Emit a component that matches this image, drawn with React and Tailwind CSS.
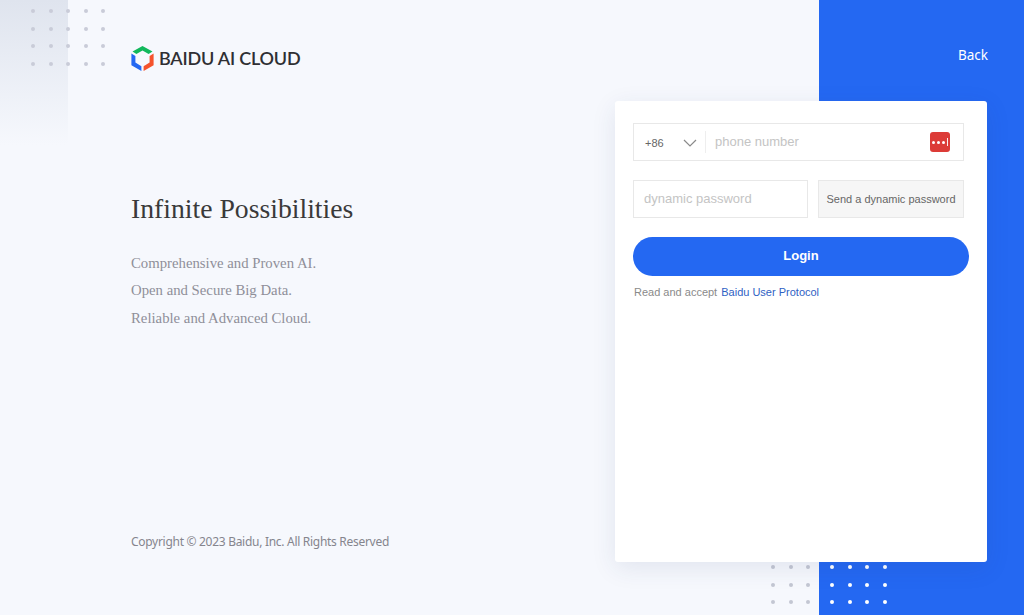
import React from 'react';

const DotGrid = ({ cols, rows, className, dotClass }) => (
  <div
    className={`absolute grid gap-[13.5px] ${cols === 5 ? 'grid-cols-5' : cols === 4 ? 'grid-cols-4' : 'grid-cols-3'} ${className}`}
  >
    {Array.from({ length: cols * rows }).map((_, i) => (
      <span key={i} className={`block w-1 h-1 rounded-full ${dotClass}`} />
    ))}
  </div>
);

const CubeLogo = () => (
  <svg width="23" height="26" viewBox="0 0 23 26" className="shrink-0">
    <path d="M11.5 0 L21.5 5.6 L17.6 8 L11.5 4.6 L5.4 8 L1.5 5.6 Z" fill="#12b85c" />
    <path d="M0.4 7.6 L4.4 10 L4.4 16.6 L10.4 20.2 L10.4 25 L0.4 19.2 Z" fill="#2468f2" />
    <path d="M22.6 7.6 L22.6 19.2 L12.6 25 L12.6 20.2 L18.6 16.6 L18.6 10 Z" fill="#f5532d" />
  </svg>
);

const App = () => {
  return (
    <div className="relative flex h-[615px] w-full overflow-hidden bg-[#f6f8fd] font-['Liberation_Sans',sans-serif]">
      <div className="absolute left-0 top-0 w-[68px] h-[145px] bg-gradient-to-b from-[#dfe4ee] to-[#f6f8fd]" />
      <DotGrid cols={5} rows={4} className="left-[31px] top-[9px]" dotClass="bg-[#c9ccd8]" />

      <main className="relative flex-1 flex flex-col pl-[131px]">
        <div className="flex items-center gap-[5px] mt-[45px] h-[27px]">
          <CubeLogo />
          <span className="-mt-[2px] font-['Lato',sans-serif] text-[18px] font-semibold leading-none tracking-[-0.2px] text-[#2f2f33] whitespace-nowrap">
            BAIDU AI CLOUD
          </span>
        </div>

        <h1 className="mt-[120px] font-['Liberation_Serif',serif] text-[27.7px] leading-[34px] font-normal text-[#3a3a3a]">
          Infinite Possibilities
        </h1>

        <div className="mt-[24px] font-['Liberation_Serif',serif] text-[14.75px] leading-[27.4px] text-[#8f8f99]">
          <p>Comprehensive and Proven AI.</p>
          <p>Open and Secure Big Data.</p>
          <p>Reliable and Advanced Cloud.</p>
        </div>

        <p className="mt-auto mb-[65px] font-['Noto_Sans',sans-serif] text-[12px] tracking-[-0.29px] leading-4 text-[#85858d]">
          Copyright © 2023 Baidu, Inc. All Rights Reserved
        </p>
      </main>

      <aside className="w-[205px] bg-[#2468f2] flex justify-end pr-[36px] pt-[46px]">
        <a className="text-[13.5px] leading-[18px] text-white font-['Noto_Sans',sans-serif]">Back</a>
      </aside>

      <DotGrid cols={3} rows={3} className="left-[771px] top-[565px]" dotClass="bg-[#c3c7d3]" />
      <DotGrid cols={4} rows={3} className="left-[830px] top-[565px]" dotClass="bg-white" />

      <section className="absolute left-[615px] top-[101px] w-[372px] h-[461px] bg-white rounded-[3px] shadow-[0_6px_24px_rgba(40,60,110,0.1)] pl-[18px] pr-[18px] pt-[22px]">
        <div className="flex items-center h-[38px] w-[331px] border border-[#e8e8e8]">
          <span className="w-[49px] pl-[11px] text-[11px] text-[#666666] mt-[2px]">+86</span>
          <svg width="14" height="8" viewBox="0 0 14 8" fill="none" className="mt-[1px]">
            <path d="M1 1 L7 7 L13 1" stroke="#8a8a8a" strokeWidth="1.2" />
          </svg>
          <span className="w-px h-[22px] bg-[#eeeeee] ml-[8px]" />
          <span className="flex-1 pl-[9px] text-[13px] text-[#c4c4c4] -mt-[1px]">phone number</span>
          <span className="mr-[13px] flex items-center justify-center gap-[2px] w-5 h-5 rounded-[3px] bg-[#dc3b37]">
            <i className="block w-[3px] h-[3px] rounded-full bg-white" />
            <i className="block w-[3px] h-[3px] rounded-full bg-white" />
            <i className="block w-[3px] h-[3px] rounded-full bg-white" />
            <i className="block w-px h-2 bg-white/90" />
          </span>
        </div>

        <div className="flex mt-[19px] w-[331px] gap-[10px]">
          <div className="flex items-center w-[175px] h-[38px] border border-[#e8e8e8] pl-[10px] text-[13px] text-[#c4c4c4]">
            dynamic password
          </div>
          <button className="flex-1 h-[38px] border border-[#e8e8e8] bg-[#f6f6f6] text-[11px] text-[#666666] whitespace-nowrap">
            Send a dynamic password
          </button>
        </div>

        <button className="block mt-[19px] pb-[2px] w-[336px] h-[39px] rounded-full bg-[#2468f2] text-[13px] font-bold text-white">
          Login
        </button>

        <p className="mt-[9px] pl-px text-[11px] leading-[14px] text-[#8a8a8a]">
          Read and accept <a className="ml-px text-[#2f5fc4]">Baidu User Protocol</a>
        </p>
      </section>
    </div>
  );
};

export default App;
